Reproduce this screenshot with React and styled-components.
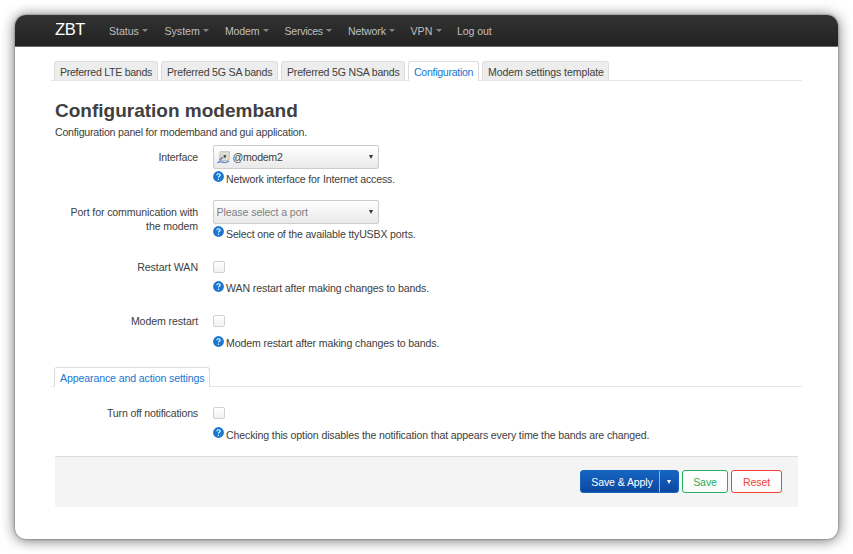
import React from "react";
import styled, { createGlobalStyle, css } from "styled-components";

const Global = createGlobalStyle`
  * { box-sizing: border-box; }
  body {
    margin: 0;
    background: #fff;
    color: #404040;
    font: 10.6px/14px "Liberation Sans", Arial, sans-serif;
    letter-spacing: -0.2px;
    overflow: hidden;
  }
  button { font: inherit; letter-spacing: inherit; }
`;

const Page = styled.div`
  height: 554px;
  padding: 15px;
`;

const Window = styled.div`
  width: 823px;
  height: 524px;
  border-radius: 11px;
  overflow: hidden;
  background: #fff;
  box-shadow: 0 0 2px rgba(0, 0, 0, 0.5), 0 1px 14px rgba(0, 0, 0, 0.6);
`;

const Header = styled.header`
  display: flex;
  height: 32px;
  padding-left: 40px;
  background: linear-gradient(#333, #222);
  border-bottom: 1px solid #6c6c6c;
`;

const Brand = styled.a`
  width: 54px;
  color: #fff;
  font-size: 16.6px;
  line-height: 29px;
  letter-spacing: -0.45px;
`;

const NavItem = styled.a`
  display: flex;
  align-items: center;
  gap: 3.5px;
  width: ${(p) => p.$w}px;
  height: 31px;
  color: #bfbfbf;
  letter-spacing: ${(p) => p.$ls}px;
  white-space: nowrap;
`;

const Caret = styled.i`
  border: 3px solid transparent;
  border-top-color: #858585;
  border-bottom: 0;
`;

const Content = styled.main`
  padding: 14px 36px 0;
`;

const TabBar = styled.nav`
  display: flex;
  gap: 3px;
  width: 751px;
  height: 20px;
  padding-left: 3px;
  border-bottom: 1px solid #e6e6e6;
`;

const Tab = styled.a`
  width: ${(p) => p.$w}px;
  height: ${(p) => (p.$active ? 20 : 19)}px;
  padding-left: 5px;
  border: 1px solid #ddd;
  border-bottom: 0;
  border-radius: 3px 3px 0 0;
  background: #ededed;
  color: #404040;
  line-height: 20px;
  white-space: nowrap;
  letter-spacing: ${(p) => p.$ls}px;
  ${(p) => p.$active && css`
    background: #fff;
    color: #1976d2;
  `}
`;

const Title = styled.h2`
  margin: 17px 0 0 4px;
  font-size: 19px;
  line-height: 26px;
  letter-spacing: 0;
`;

const Intro = styled.p`
  height: 21px;
  margin: 0 0 0 4px;
  line-height: 16px;
  letter-spacing: -0.21px;
`;

const Row = styled.div`
  display: grid;
  grid-template-columns: 143px 1fr;
  column-gap: 15px;
  height: ${(p) => p.$h}px;
  padding-left: 4px;
`;

const Label = styled.label`
  padding: 5px 0 0 10px;
  text-align: right;
  letter-spacing: ${(p) => p.$ls ?? -0.12}px;
`;

const Select = styled.div`
  display: flex;
  align-items: center;
  gap: 3px;
  width: 166px;
  height: 24px;
  padding: 0 5px 0 2.5px;
  border: 1px solid #ccc;
  border-radius: 2px;
  background: linear-gradient(#fff, #e9e9e9);
  color: ${(p) => (p.$muted ? "#808080" : "#404040")};
  letter-spacing: ${(p) => p.$ls}px;
`;

const Arrow = styled.i`
  margin-left: auto;
  border: 2.5px solid transparent;
  border-top: 4px solid ${(p) => p.$color};
  border-bottom: 0;
`;

const Check = styled.div`
  width: 12px;
  height: 12px;
  margin: 6px 0 ${(p) => p.$gap}px;
  border: 1px solid #d0d0d0;
  border-radius: 2px;
  background: linear-gradient(#fff, #f1f1f1);
`;

const Help = styled.div`
  display: flex;
  gap: 2px;
  padding-top: 2px;
  line-height: ${(p) => p.$lh ?? 15.5}px;
  letter-spacing: ${(p) => p.$ls}px;
`;

const Footer = styled.footer`
  display: flex;
  justify-content: flex-end;
  gap: 3px;
  width: 743px;
  height: 51px;
  margin-left: 4px;
  padding: 13px 16px 0;
  border-top: 1px solid #ddd;
  border-radius: 0 0 2px 2px;
  background: #f4f4f4;
`;

const Button = styled.button`
  width: ${(p) => p.$w}px;
  height: 23px;
  padding: 0;
  border: 1px solid ${(p) => p.$color};
  border-radius: 3px;
  background: linear-gradient(#fff, #fafafa);
  color: ${(p) => p.$color};
  line-height: 20px;
  letter-spacing: -0.1px;
`;

const Split = styled.div`
  display: flex;
  width: 99px;
  height: 23px;
  border: 1px solid #1766bd;
  border-radius: 3px;
  background: linear-gradient(#1565c0, #0d47a1);
  color: #fff;
`;

const SplitMain = styled.span`
  width: 79px;
  padding-left: 4px;
  border-right: 1px solid #90b5e0;
  line-height: 22px;
  text-align: center;
  letter-spacing: -0.12px;
`;

const SplitMenu = styled.span`
  display: flex;
  align-items: center;
  padding-left: 7px;
`;

function HelpIcon() {
  return (
    <svg width="11" height="11" viewBox="0 0 11 11">
      <circle cx="5.5" cy="5.5" r="5.4" fill="#1976d2" />
      <path d="M3.8 4.2Q3.9 2.7 5.5 2.7T7.2 4.1Q7.2 4.8 6.3 5.3Q5.5 5.7 5.5 6.5" fill="none" stroke="#fff" strokeWidth="1.1" />
      <circle cx="5.5" cy="8.2" r=".7" fill="#fff" />
    </svg>
  );
}

function PortIcon() {
  return (
    <svg width="13" height="13" viewBox="0 0 13 13">
      <path d="M3.2.8h9.4l-.8 8.6H2.4z" fill="#e4e2dc" stroke="#b3b1aa" strokeWidth=".8" />
      <path d="M5.4 3h4.8l-.5 4.6H5z" fill="#d2d1c2" />
      <path d="M6.8 4.2h2v2.2h-2z" fill="#34362f" />
      <path d="M5.6 6.2 2.8 9.4" stroke="#7d8da4" strokeWidth="1.8" />
      <path d="M.2 11.8Q3 10.2 6 11.2T12 10.2" fill="none" stroke="#6794cf" strokeWidth="1.6" />
    </svg>
  );
}

const NAV = [
  ["Status", 55.5, -0.05], ["System", 60.5, 0], ["Modem", 59.5, -0.2], ["Services", 63.5, -0.28],
  ["Network", 62.5, -0.15], ["VPN", 46.5, 0], ["Log out", 50, -0.1],
];
const TABS = [
  ["Preferred LTE bands", 104, -0.29], ["Preferred 5G SA bands", 117, -0.2],
  ["Preferred 5G NSA bands", 124, -0.21], ["Configuration", 71, -0.3],
  ["Modem settings template", 127, -0.11],
];

function CheckRow({ label, help, h, ls, gap = 6, hls, lh }) {
  return (
    <Row $h={h}>
      <Label $ls={ls}>{label}</Label>
      <div>
        <Check $gap={gap} />
        <Help $ls={hls} $lh={lh}><HelpIcon />{help}</Help>
      </div>
    </Row>
  );
}

export default function App() {
  return (
    <Page>
      <Global />
      <Window>
        <Header>
          <Brand>ZBT</Brand>
          {NAV.map(([name, w, ls]) => (
            <NavItem key={name} $w={w} $ls={ls}>{name}{name !== "Log out" && <Caret />}</NavItem>
          ))}
        </Header>
        <Content>
          <TabBar>
            {TABS.map(([name, w, ls]) => (
              <Tab key={name} $w={w} $ls={ls} $active={name === "Configuration"}>{name}</Tab>
            ))}
          </TabBar>
          <Title>Configuration modemband</Title>
          <Intro>Configuration panel for modemband and gui application.</Intro>
          <Row $h={55}>
            <Label $ls={-0.2}>Interface</Label>
            <div>
              <Select $ls={-0.28}><PortIcon />@modem2<Arrow $color="#333" /></Select>
              <Help $ls={-0.17} $lh={17}><HelpIcon />Network interface for Internet access.</Help>
            </div>
          </Row>
          <Row $h={55}>
            <Label>Port for communication with the modem</Label>
            <div>
              <Select $muted $ls={-0.09}>Please select a port<Arrow $color="#333" /></Select>
              <Help $ls={-0.17} $lh={17}><HelpIcon />Select one of the available ttyUSBX ports.</Help>
            </div>
          </Row>
          <CheckRow h={54} label="Restart WAN" help="WAN restart after making changes to bands." ls={-0.05} hls={-0.12} />
          <CheckRow h={58} label="Modem restart" help="Modem restart after making changes to bands." ls={-0.09} gap={7} hls={-0.13} />
          <TabBar>
            <Tab $w={156} $ls={-0.13} $active>Appearance and action settings</Tab>
          </TabBar>
          <Row $h={14} />
          <CheckRow h={55} label="Turn off notifications" help="Checking this option disables the notification that appears every time the bands are changed." ls={-0.17} hls={-0.14} lh={17} />
          <Footer>
            <Split>
              <SplitMain>Save &amp; Apply</SplitMain>
              <SplitMenu><Arrow $color="#fff" /></SplitMenu>
            </Split>
            <Button $w={46} $color="#27ae60">Save</Button>
            <Button $w={51} $color="#f44336">Reset</Button>
          </Footer>
        </Content>
      </Window>
    </Page>
  );
}
